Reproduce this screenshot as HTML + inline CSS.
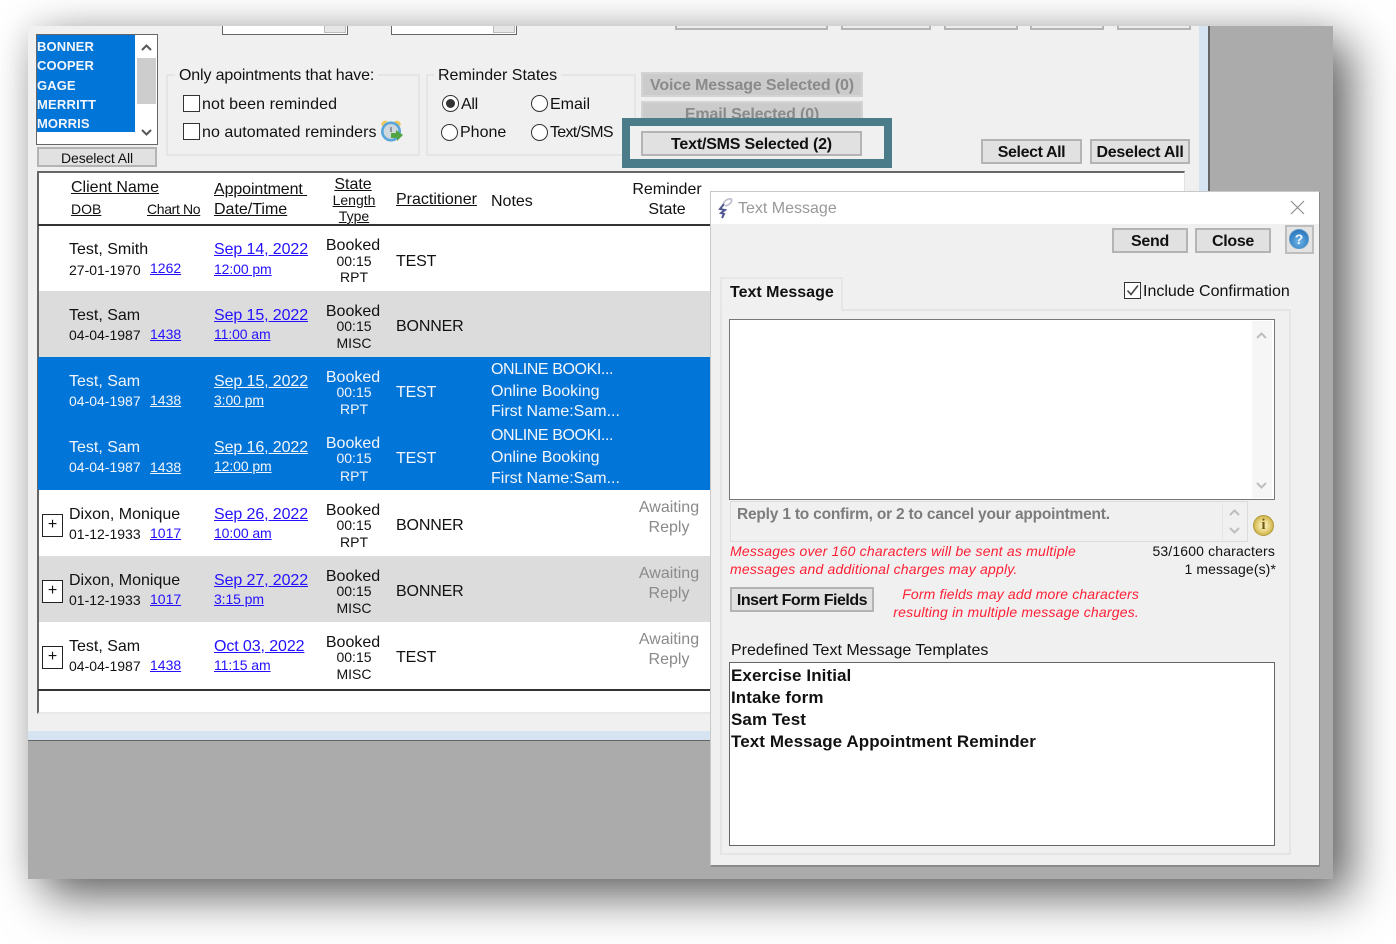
<!DOCTYPE html>
<html><head><meta charset="utf-8"><title>Text Message</title>
<style>
html,body{margin:0;padding:0;width:1396px;height:944px;overflow:hidden;background:#fff;font-family:"Liberation Sans",Arial,sans-serif;color:#111}
#s{position:absolute;left:28px;top:26px;width:1305px;height:853px;background:#ababab;box-shadow:18px 18px 45px rgba(0,0,0,.58),0 0 32px rgba(0,0,0,.13)}
#p{position:absolute;left:0;top:0;width:1396px;height:944px;overflow:hidden;filter:blur(.3px)}
#p div,#p span,#p svg{position:absolute}
.t{font-size:16px;line-height:20px;white-space:nowrap;margin-top:2px}
.s{font-size:14px;margin-top:0}
.o{margin-top:1px}
.b{font-weight:bold}
.u{text-decoration:underline}
.l{color:#2410ff;text-decoration:underline}
.c{transform:translateX(-50%)}
.w{color:#f2f6fb}
.wl{color:#f2f6fb;text-decoration:underline}
.btn{box-sizing:border-box;background:#e1e1e1;border:2px solid #b4b4b4;text-align:center;font-weight:bold;font-size:16px;white-space:nowrap;letter-spacing:-.3px;line-height:24px}
.stub{box-sizing:border-box;top:26px;height:4px;background:#ececec;border:2px solid #b4b4b4;border-top:0}
.cb{box-sizing:border-box;width:17px;height:17px;background:#fff;border:1.5px solid #333}
.rd{box-sizing:border-box;width:17px;height:17px;background:#fff;border:1.5px solid #333;border-radius:50%}
.pl{box-sizing:border-box;left:42px;width:21px;height:23px;background:#fff;border:1.5px solid #222;text-align:center;font-size:16px;line-height:19px}
.g{color:#8a8a8a}
.r{color:#ff1f35;font-style:italic;font-size:14px;line-height:18px;white-space:nowrap;letter-spacing:.2px}
.gb{box-sizing:border-box;border:2px solid #e5e5e5}
.ar{fill:none;stroke:#555;stroke-width:2}
.ar2{fill:none;stroke:#bdbdbd;stroke-width:2}
.n{letter-spacing:-.4px}
.d{letter-spacing:-.1px}
</style></head><body>
<div id="s"></div>
<div id="p">
<!-- main window -->
<div style="left:28px;top:26px;width:1171px;height:705px;background:#f0f0f0"></div>
<div style="left:1199px;top:26px;width:9px;height:714px;background:#d6e4f2"></div>
<div style="left:1208px;top:26px;width:2px;height:166px;background:#666"></div>
<div style="left:28px;top:731px;width:1180px;height:9px;background:#d6e4f2"></div>
<div style="left:28px;top:740px;width:684px;height:1px;background:#666"></div>

<!-- top stubs -->
<div style="box-sizing:border-box;left:222px;top:26px;width:126px;height:9px;background:#fff;border:1.5px solid #666;border-top:0"></div>
<div style="box-sizing:border-box;left:324px;top:26px;width:22px;height:7px;background:#e6e6e6;border:1px solid #bbb;border-top:0"></div>
<div style="box-sizing:border-box;left:391px;top:26px;width:126px;height:9px;background:#fff;border:1.5px solid #666;border-top:0"></div>
<div style="box-sizing:border-box;left:493px;top:26px;width:22px;height:7px;background:#e6e6e6;border:1px solid #bbb;border-top:0"></div>
<div class="stub" style="left:675px;width:153px"></div>
<div class="stub" style="left:841px;width:90px"></div>
<div class="stub" style="left:944px;width:74px"></div>
<div class="stub" style="left:1030px;width:74px"></div>
<div class="stub" style="left:1117px;width:74px"></div>

<!-- practitioner list -->
<div style="box-sizing:border-box;left:36px;top:34px;width:122px;height:111px;background:#fff;border:1.5px solid #666"></div>
<div style="left:37px;top:35px;width:98px;height:97px;background:#0275d8"></div>
<div class="t s b w" style="left:37px;top:37px;font-size:13px;letter-spacing:.1px">BONNER</div>
<div class="t s b w" style="left:37px;top:56px;font-size:13px;letter-spacing:.1px">COOPER</div>
<div class="t s b w" style="left:37px;top:76px;font-size:13px;letter-spacing:.1px">GAGE</div>
<div class="t s b w" style="left:37px;top:95px;font-size:13px;letter-spacing:.2px">MERRITT</div>
<div class="t s b w" style="left:37px;top:114px;font-size:13px;letter-spacing:.1px">MORRIS</div>
<div style="left:137px;top:58px;width:19px;height:46px;background:#cdcdcd"></div>
<svg style="left:141px;top:43px" width="11" height="8"><path class="ar" d="M1 7L5.5 2.5L10 7"/></svg>
<svg style="left:141px;top:129px" width="11" height="8"><path class="ar" d="M1 1L5.5 5.5L10 1"/></svg>
<div class="btn" style="left:37px;top:147px;width:120px;height:20px;font-weight:normal;font-size:14px;line-height:19px;letter-spacing:-.1px">Deselect All</div>

<!-- group 1 -->
<div class="gb" style="left:166px;top:74px;width:254px;height:82px"></div>
<div class="t" style="left:175px;top:64px;background:#f0f0f0;padding:0 4px;letter-spacing:-.15px">Only apointments that have:</div>
<div class="cb" style="left:183px;top:95px"></div>
<div class="t o" style="left:202px;top:94px;letter-spacing:.1px">not been reminded</div>
<div class="cb" style="left:183px;top:123px"></div>
<div class="t o" style="left:202px;top:122px;letter-spacing:.05px">no automated reminders</div>
<svg style="left:380px;top:120px" width="23" height="24" viewBox="0 0 23 24"><ellipse cx="4.5" cy="3.5" rx="3.5" ry="2.6" fill="#efc95c" transform="rotate(-35 4.5 3.5)"/><ellipse cx="17.5" cy="3.5" rx="3.5" ry="2.6" fill="#efc95c" transform="rotate(35 17.5 3.5)"/><circle cx="11" cy="11.5" r="8.7" fill="#cfd8dd" stroke="#5aa5dc" stroke-width="2.6"/><path d="M11 7v5" stroke="#667" stroke-width="1.2"/><path d="M11 13h5v-3l7 5-6 6v-3h-6z" fill="#52a544"/></svg>

<!-- group 2 -->
<div class="gb" style="left:426px;top:74px;width:210px;height:82px"></div>
<div class="t" style="left:434px;top:64px;background:#f0f0f0;padding:0 4px">Reminder States</div>
<div class="rd" style="left:442px;top:95px"></div>
<div style="left:446px;top:99px;width:9px;height:9px;border-radius:50%;background:#333"></div>
<div class="t o" style="left:461px;top:94px;letter-spacing:-.3px">All</div>
<div class="rd" style="left:531px;top:95px"></div>
<div class="t o" style="left:550px;top:94px">Email</div>
<div class="rd" style="left:441px;top:124px"></div>
<div class="t o" style="left:460px;top:122px">Phone</div>
<div class="rd" style="left:531px;top:124px"></div>
<div class="t o" style="left:550px;top:122px;letter-spacing:-.7px">Text/SMS</div>

<!-- action buttons -->
<div class="btn g" style="left:641px;top:72px;width:222px;height:25px;background:#cbcbcb;border-color:#d4d4d4;letter-spacing:-.15px">Voice Message Selected (0)</div>
<div class="btn g" style="left:641px;top:101px;width:222px;height:25px;background:#cbcbcb;border-color:#d4d4d4;letter-spacing:-.15px">Email Selected (0)</div>
<div style="box-sizing:border-box;left:622px;top:118px;width:270px;height:50px;border:8px solid #4a7c8a;border-bottom-width:9px;background:#f0f0f0"></div>
<div class="btn" style="left:641px;top:131px;width:221px;height:25px;letter-spacing:-.2px">Text/SMS Selected (2)</div>
<div class="btn" style="left:981px;top:139px;width:101px;height:25px;letter-spacing:-.4px">Select All</div>
<div class="btn" style="left:1090px;top:139px;width:100px;height:25px;letter-spacing:-.25px">Deselect All</div>

<!-- table -->
<div style="box-sizing:border-box;left:37px;top:171px;width:1148px;height:543px;background:#fff;border-top:2px solid #666;border-left:2px solid #666;border-right:1px solid #e2e2e2;border-bottom:2px solid #e8e8e8"></div>
<div style="left:38px;top:224px;width:680px;height:1.5px;background:#333"></div>
<div style="left:39px;top:291px;width:680px;height:66px;background:#dcdcdc"></div>
<div style="left:38px;top:357px;width:680px;height:133px;background:#0275d8"></div>
<div style="left:39px;top:556px;width:680px;height:66px;background:#dcdcdc"></div>
<div style="left:38px;top:689px;width:680px;height:1.5px;background:#333"></div>

<!-- header -->
<div class="t u" style="left:71px;top:176px">Client Name</div>
<div class="t u s" style="left:71px;top:199px">DOB</div>
<div class="t u s" style="left:147px;top:199px;letter-spacing:-.35px">Chart No</div>
<div class="t u" style="left:214px;top:178px;white-space:pre;letter-spacing:-.1px">Appointment </div>
<div class="t u" style="left:214px;top:198px">Date/Time</div>
<div class="t u c" style="left:353px;top:173px">State</div>
<div class="t u s c" style="left:354px;top:190px">Length</div>
<div class="t u s c" style="left:354px;top:206px">Type</div>
<div class="t u" style="left:396px;top:188px">Practitioner</div>
<div class="t" style="left:491px;top:190px">Notes</div>
<div class="t c" style="left:667px;top:178px">Reminder</div>
<div class="t c" style="left:667px;top:198px">State</div>

<!-- row 1 -->
<div class="t" style="left:69px;top:238px">Test, Smith</div>
<div class="t s" style="left:69px;top:260px">27-01-1970</div>
<div class="t s l" style="left:150px;top:258px">1262</div>
<div class="t l d" style="left:214px;top:238px">Sep 14, 2022</div>
<div class="t s l d" style="left:214px;top:259px">12:00 pm</div>
<div class="t c o" style="left:353px;top:235px">Booked</div>
<div class="t s c" style="left:354px;top:251px">00:15</div>
<div class="t s c" style="left:354px;top:267px">RPT</div>
<div class="t" style="left:396px;top:250px;letter-spacing:-.15px">TEST</div>
<!-- row 2 -->
<div class="t" style="left:69px;top:304px">Test, Sam</div>
<div class="t s" style="left:69px;top:325px">04-04-1987</div>
<div class="t s l" style="left:150px;top:324px">1438</div>
<div class="t l d" style="left:214px;top:304px">Sep 15, 2022</div>
<div class="t s l d" style="left:214px;top:324px">11:00 am</div>
<div class="t c o" style="left:353px;top:301px">Booked</div>
<div class="t s c" style="left:354px;top:316px">00:15</div>
<div class="t s c" style="left:354px;top:333px">MISC</div>
<div class="t" style="left:396px;top:315px;letter-spacing:-.15px">BONNER</div>
<!-- row 3 -->
<div class="t w" style="left:69px;top:370px">Test, Sam</div>
<div class="t s w" style="left:69px;top:391px">04-04-1987</div>
<div class="t s wl" style="left:150px;top:390px">1438</div>
<div class="t wl d" style="left:214px;top:370px">Sep 15, 2022</div>
<div class="t s wl d" style="left:214px;top:390px">3:00 pm</div>
<div class="t c w o" style="left:353px;top:367px">Booked</div>
<div class="t s c w" style="left:354px;top:382px">00:15</div>
<div class="t s c w" style="left:354px;top:399px">RPT</div>
<div class="t w" style="left:396px;top:381px;letter-spacing:-.15px">TEST</div>
<div class="t w n" style="left:491px;top:358px">ONLINE BOOKI...</div>
<div class="t w" style="left:491px;top:380px">Online Booking</div>
<div class="t w" style="left:491px;top:400px">First Name:Sam...</div>
<!-- row 4 -->
<div class="t w" style="left:69px;top:436px">Test, Sam</div>
<div class="t s w" style="left:69px;top:457px">04-04-1987</div>
<div class="t s wl" style="left:150px;top:457px">1438</div>
<div class="t wl d" style="left:214px;top:436px">Sep 16, 2022</div>
<div class="t s wl d" style="left:214px;top:456px">12:00 pm</div>
<div class="t c w o" style="left:353px;top:433px">Booked</div>
<div class="t s c w" style="left:354px;top:448px">00:15</div>
<div class="t s c w" style="left:354px;top:466px">RPT</div>
<div class="t w" style="left:396px;top:447px;letter-spacing:-.15px">TEST</div>
<div class="t w n" style="left:491px;top:424px">ONLINE BOOKI...</div>
<div class="t w" style="left:491px;top:446px">Online Booking</div>
<div class="t w" style="left:491px;top:467px">First Name:Sam...</div>
<!-- row 5 -->
<div class="pl" style="top:514px">+</div>
<div class="t" style="left:69px;top:503px">Dixon, Monique</div>
<div class="t s" style="left:69px;top:524px">01-12-1933</div>
<div class="t s l" style="left:150px;top:523px">1017</div>
<div class="t l d" style="left:214px;top:503px">Sep 26, 2022</div>
<div class="t s l d" style="left:214px;top:523px">10:00 am</div>
<div class="t c o" style="left:353px;top:500px">Booked</div>
<div class="t s c" style="left:354px;top:515px">00:15</div>
<div class="t s c" style="left:354px;top:532px">RPT</div>
<div class="t" style="left:396px;top:514px;letter-spacing:-.15px">BONNER</div>
<div class="t c g o" style="left:669px;top:497px">Awaiting</div>
<div class="t c g o" style="left:669px;top:517px">Reply</div>
<!-- row 6 -->
<div class="pl" style="top:580px">+</div>
<div class="t" style="left:69px;top:569px">Dixon, Monique</div>
<div class="t s" style="left:69px;top:590px">01-12-1933</div>
<div class="t s l" style="left:150px;top:589px">1017</div>
<div class="t l d" style="left:214px;top:569px">Sep 27, 2022</div>
<div class="t s l d" style="left:214px;top:589px">3:15 pm</div>
<div class="t c o" style="left:353px;top:566px">Booked</div>
<div class="t s c" style="left:354px;top:581px">00:15</div>
<div class="t s c" style="left:354px;top:598px">MISC</div>
<div class="t" style="left:396px;top:580px;letter-spacing:-.15px">BONNER</div>
<div class="t c g o" style="left:669px;top:563px">Awaiting</div>
<div class="t c g o" style="left:669px;top:583px">Reply</div>
<!-- row 7 -->
<div class="pl" style="top:646px">+</div>
<div class="t" style="left:69px;top:635px">Test, Sam</div>
<div class="t s" style="left:69px;top:656px">04-04-1987</div>
<div class="t s l" style="left:150px;top:655px">1438</div>
<div class="t l d" style="left:214px;top:635px">Oct 03, 2022</div>
<div class="t s l d" style="left:214px;top:655px">11:15 am</div>
<div class="t c o" style="left:353px;top:632px">Booked</div>
<div class="t s c" style="left:354px;top:647px">00:15</div>
<div class="t s c" style="left:354px;top:664px">MISC</div>
<div class="t" style="left:396px;top:646px;letter-spacing:-.15px">TEST</div>
<div class="t c g o" style="left:669px;top:629px">Awaiting</div>
<div class="t c g o" style="left:669px;top:649px">Reply</div>

<!-- dialog -->
<div style="box-sizing:border-box;left:710px;top:191px;width:610px;height:676px;background:#f0f0f0;border:1px solid #c8c8c8;border-right-color:#8a8a8a;border-bottom:2px solid #8a8a8a"></div>
<div style="left:711px;top:192px;width:608px;height:32px;background:#fff"></div>
<svg style="left:716px;top:196px" width="20" height="24" viewBox="0 0 20 24"><path d="M7 9C8 5 12 2 15 3C17 5 14 9 9 10" fill="none" stroke="#b9bccb" stroke-width="1.6"/><path d="M8 8L4 13L9 14L5 17L8 18L6 22" fill="none" stroke="#50578f" stroke-width="2"/></svg>
<div class="t" style="left:738px;top:197px;color:#999">Text Message</div>
<svg style="left:1290px;top:200px" width="15" height="15"><path d="M1 1L14 14M14 1L1 14" stroke="#8e8e8e" stroke-width="1.2" fill="none"/></svg>
<div class="btn" style="left:1112px;top:228px;width:76px;height:25px">Send</div>
<div class="btn" style="left:1195px;top:228px;width:76px;height:25px">Close</div>
<div style="box-sizing:border-box;left:1285px;top:225px;width:29px;height:29px;background:#e3e3e3;border:2px solid #bdbdbd"></div>
<div style="box-sizing:border-box;left:1289px;top:229px;width:20px;height:20px;border-radius:50%;background:radial-gradient(circle at 50% 65%,#6fb6ea,#2c78bd 75%);border:1.5px solid #5f9ccb"></div>
<div class="b" style="left:1289px;top:229px;width:20px;height:20px;line-height:20px;text-align:center;font-size:14px;color:#f0f7fc">?</div>

<!-- tab pane -->
<div class="gb" style="left:720px;top:309px;width:571px;height:546px"></div>
<div style="box-sizing:border-box;left:720px;top:277px;width:123px;height:34px;background:#f0f0f0;border:2px solid #e6e6e6;border-bottom:0"></div>
<div class="t b" style="left:730px;top:281px">Text Message</div>
<div class="cb" style="left:1124px;top:282px"></div>
<svg style="left:1124px;top:282px" width="17" height="17"><path d="M3.5 8.5L7 12.5L14 3.5" fill="none" stroke="#444" stroke-width="1.6"/></svg>
<div class="t" style="left:1143px;top:280px">Include Confirmation</div>

<!-- textarea -->
<div style="box-sizing:border-box;left:729px;top:319px;width:546px;height:181px;background:#fff;border:1.5px solid #777"></div>
<div style="left:1252px;top:321px;width:20px;height:177px;background:#f6f6f6"></div>
<svg style="left:1256px;top:331px" width="11" height="8"><path class="ar2" d="M1 7L5.5 2.5L10 7"/></svg>
<svg style="left:1256px;top:482px" width="11" height="8"><path class="ar2" d="M1 1L5.5 5.5L10 1"/></svg>

<!-- reply box -->
<div class="gb" style="left:730px;top:501px;width:518px;height:41px;border-width:1.5px;border-color:#dcdcdc"></div>
<div class="t b" style="left:737px;top:503px;color:#7c7c7c;font-size:15.5px;letter-spacing:-.2px">Reply 1 to confirm, or 2 to cancel your appointment.</div>
<div style="left:1222px;top:503px;width:1px;height:37px;background:#e4e4e4"></div>
<svg style="left:1229px;top:508px" width="11" height="8"><path class="ar2" d="M1 7L5.5 2.5L10 7"/></svg>
<svg style="left:1229px;top:527px" width="11" height="8"><path class="ar2" d="M1 1L5.5 5.5L10 1"/></svg>
<div style="box-sizing:border-box;left:1253px;top:515px;width:21px;height:21px;border-radius:50%;background:radial-gradient(circle,#f4e7a8 25%,#d3b84f 70%,#a88f2e);border:1px solid #b09a3e"></div>
<div class="b" style="left:1253px;top:515px;width:21px;height:21px;line-height:21px;text-align:center;font-size:15px;color:#6f5c14;font-family:'Liberation Serif',serif">i</div>

<div class="r" style="left:730px;top:542px">Messages over 160 characters will be sent as multiple</div>
<div class="r" style="left:730px;top:560px">messages and additional charges may apply.</div>
<div class="t s" style="right:121px;top:541px;letter-spacing:.15px">53/1600 characters</div>
<div class="t s" style="right:120px;top:559px;letter-spacing:.1px">1 message(s)*</div>
<div class="btn" style="left:730px;top:587px;width:144px;height:25px;color:#111;letter-spacing:-.47px">Insert Form Fields</div>
<div class="r" style="right:257px;top:585px;letter-spacing:.14px">Form fields may add more characters</div>
<div class="r" style="right:257px;top:603px">resulting in multiple message charges.</div>
<div class="t" style="left:731px;top:639px">Predefined Text Message Templates</div>

<!-- templates -->
<div style="box-sizing:border-box;left:729px;top:662px;width:546px;height:184px;background:#fff;border:1.5px solid #666"></div>
<div class="t b o" style="left:731px;top:665px;font-size:17px;letter-spacing:.08px">Exercise Initial</div>
<div class="t b o" style="left:731px;top:687px;font-size:17px;letter-spacing:.08px">Intake form</div>
<div class="t b o" style="left:731px;top:709px;font-size:17px;letter-spacing:.08px">Sam Test</div>
<div class="t b o" style="left:731px;top:731px;font-size:17px;letter-spacing:.08px">Text Message Appointment Reminder</div>
</div>
</body></html>
